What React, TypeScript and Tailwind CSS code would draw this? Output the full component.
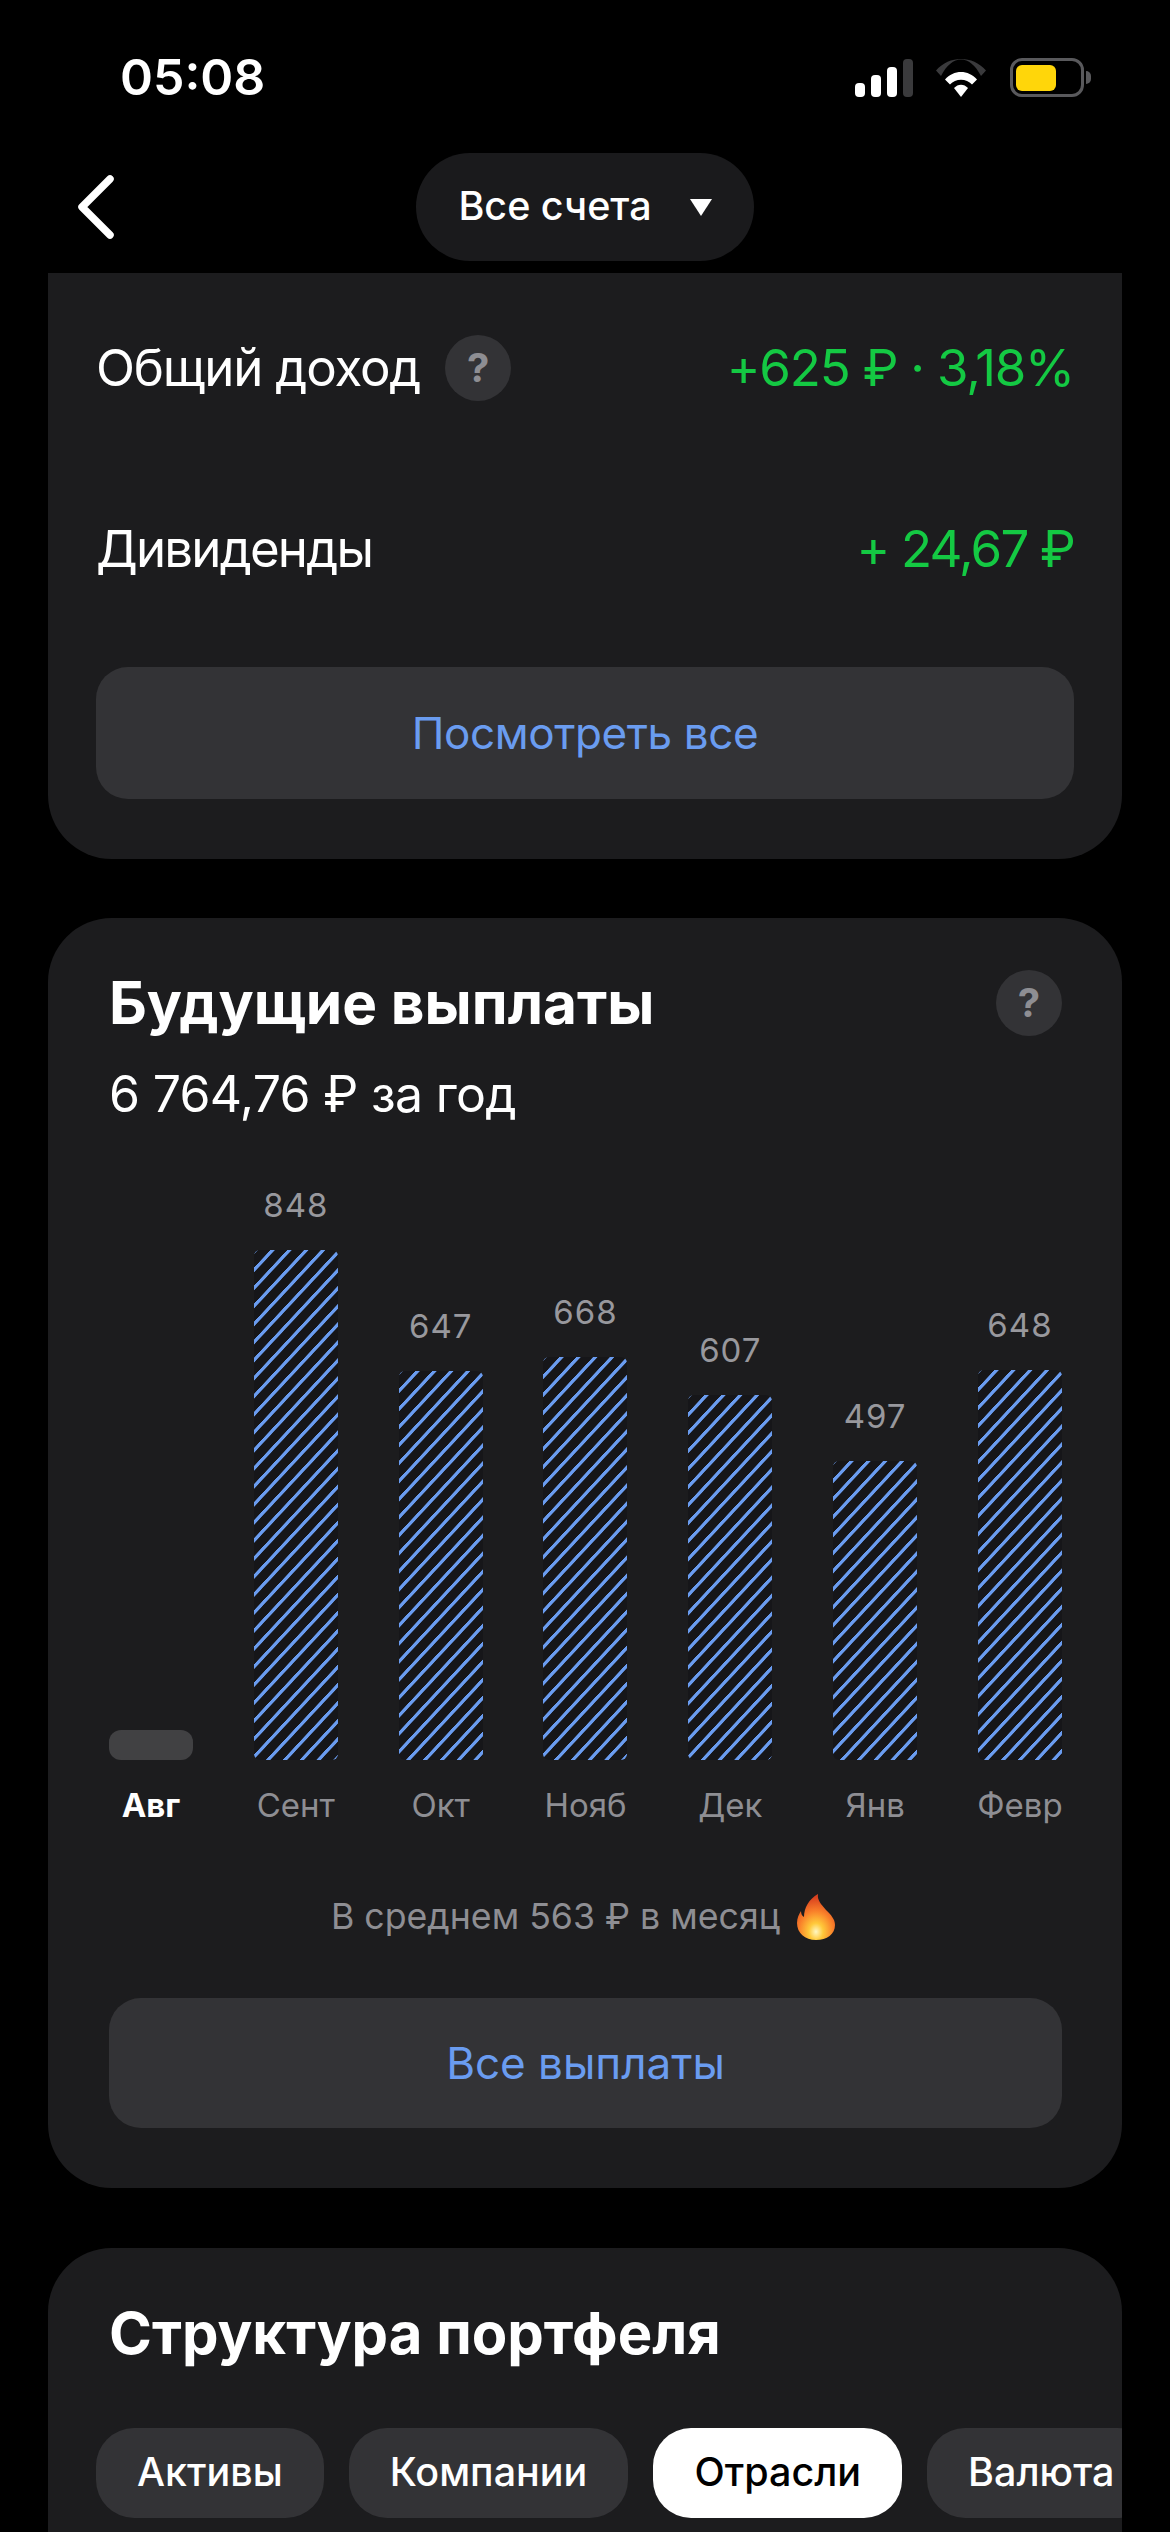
import React from 'react';

const bars = [
  { month: 'Авг', value: '', height: 30 },
  { month: 'Сент', value: '848', height: 510 },
  { month: 'Окт', value: '647', height: 389 },
  { month: 'Нояб', value: '668', height: 403 },
  { month: 'Дек', value: '607', height: 365 },
  { month: 'Янв', value: '497', height: 299 },
  { month: 'Февр', value: '648', height: 390 },
];

const chips = ['Активы', 'Компании', 'Отрасли', 'Валюта'];

const Help: React.FC = () => (
  <div className="flex h-[66px] w-[66px] shrink-0 items-center justify-center rounded-full bg-[#333336] text-[40px] font-bold text-[#8e8e93]">
    ?
  </div>
);

const StatusIcons: React.FC = () => (
  <div className="flex items-center">
    <svg width="58" height="38" viewBox="0 0 58 38" className="mr-[23px]">
      <rect x="0" y="24" width="10" height="14" rx="4" fill="#fff" />
      <rect x="16" y="16" width="10" height="22" rx="4" fill="#fff" />
      <rect x="32" y="8" width="10" height="30" rx="4" fill="#fff" />
      <rect x="48" y="0" width="10" height="38" rx="4" fill="#3a3a3c" />
    </svg>
    <svg width="50" height="38" viewBox="0 0 50 38" className="mr-[24px]">
      <path d="M0 11.5C13.5-3.8 36.5-3.8 50 11.5L45 17C34-5 16-5 5 17Z" fill="#3a3a3c" />
      <path d="M9 20.5C17.500 10.500 32.500 10.500 41 20.500L36 25.500C30.500 19 19.500 19 14 25.500Z" fill="#fff" />
      <path d="M18 29C22 24.500 28 24.500 32 29L25 38Z" fill="#fff" />
    </svg>
    <div className="relative flex h-[39px] w-[74px] items-center rounded-[12px] border-[3px] border-[#59595c] pl-[3px]">
      <div className="h-[26px] w-[40px] rounded-[6px] bg-[#ffd60a]" />
      <div className="absolute right-[-10px] top-[10px] h-[13px] w-[5px] rounded-r-full bg-[#59595c]" />
    </div>
  </div>
);

const Flame: React.FC = () => (
  <svg width="38" height="46" viewBox="0 0 38 46" className="ml-[17px]">
    <defs>
      <radialGradient id="flame" cx="50%" cy="82%" r="75%">
        <stop offset="0%" stopColor="#fff7c2" />
        <stop offset="25%" stopColor="#ffc93a" />
        <stop offset="60%" stopColor="#f9802a" />
        <stop offset="100%" stopColor="#d9401f" />
      </radialGradient>
    </defs>
    <path
      d="M19 46C8 46 0 39 0 29C0 24 2 20 4 17C4 20 5 22 7 23C7 14 12 5 21 0C20 6 24 10 29 16C34 21 38 25 38 31C38 40 30 46 19 46Z"
      fill="url(#flame)"
    />
  </svg>
);

export default function App() {
  return (
    <div className="h-[2532px] w-[1170px] overflow-hidden bg-black font-['Inter','Noto_Sans',sans-serif] text-white">
      {/* Status bar */}
      <div className="flex h-[153px] items-start justify-between pl-[120px] pr-[86px] pt-[58px]">
        <span className="text-[50px] font-semibold leading-[38px]">05:08</span>
        <StatusIcons />
      </div>

      {/* Header */}
      <div className="grid h-[108px] grid-cols-[1fr_auto_1fr] items-center">
        <svg width="40" height="64" viewBox="0 0 40 64" className="ml-[76px]" fill="none">
          <path d="M34 4L6 32L34 60" stroke="#fff" strokeWidth="7.500" strokeLinecap="round" strokeLinejoin="round" />
        </svg>
        <div className="flex h-[108px] w-[338px] items-center justify-center rounded-[54px] bg-[#1a1a1c]">
          <span className="text-[39.500px] font-medium">Все счета</span>
          <span className="ml-[38px] h-0 w-0 border-x-[11px] border-t-[17px] border-x-transparent border-t-white" />
        </div>
      </div>

      {/* Income card */}
      <div className="mx-12 mt-3 rounded-b-[64px] bg-[#1c1c1e] pb-[60px] pl-12 pr-[48px] pt-[5px]">
        <div className="flex h-[180px] items-center justify-between">
          <div className="flex items-center">
            <span className="text-[51px] tracking-[-1.200px]">Общий доход</span>
            <div className="ml-[25px]">
              <Help />
            </div>
          </div>
          <span className="text-[51px] tracking-[-1.200px] text-[#14c943]">+625 ₽ · 3,18%</span>
        </div>
        <div className="flex h-[182px] items-center justify-between">
          <span className="text-[51px] tracking-[-1.800px]">Дивиденды</span>
          <span className="text-[51px] tracking-[-1.800px] text-[#14c943]">+ 24,67 ₽</span>
        </div>
        <div className="mt-[27px] flex h-[132px] items-center justify-center rounded-[32px] bg-[#333336] text-[44px] tracking-[-0.400px] text-[#6a9cf0]">
          Посмотреть все
        </div>
      </div>

      {/* Future payouts */}
      <div className="mx-12 mt-[59px] rounded-[64px] bg-[#1c1c1e] pb-[60px] pl-[61px] pr-[60px] pt-[50px]">
        <div className="flex h-[70px] items-center justify-between">
          <span className="text-[58.500px] font-bold">Будущие выплаты</span>
          <Help />
        </div>
        <div className="mt-[26px] text-[50px] leading-[60px] tracking-[-0.700px]">6 764,76 ₽ за год</div>

        <div className="mt-[61px] flex items-end justify-between">
          {bars.map((bar, i) => (
            <div key={bar.month} className="flex w-[84px] flex-col items-center">
              {bar.value && (
                <span className="mb-[25px] h-[40px] text-[33px] leading-[40px] tracking-[1px] text-[#98989d]">{bar.value}</span>
              )}
              {i === 0 ? (
                <div className="h-[30px] w-[84px] rounded-[12px] bg-[#414143]" />
              ) : (
                <div
                  className="w-[84px] rounded-[6px] bg-[repeating-linear-gradient(133deg,#6a9cf0_0,#6a9cf0_2.600px,#161619_3.400px,#161619_11.800px,#6a9cf0_12.300px)]"
                  style={{ height: bar.height }}
                />
              )}
              <span
                className={
                  i === 0
                    ? 'mt-[20px] h-[50px] text-[33px] font-bold leading-[50px] text-white'
                    : 'mt-[20px] h-[50px] whitespace-nowrap text-[33px] leading-[50px] text-[#8e8e93]'
                }
              >
                {bar.month}
              </span>
            </div>
          ))}
        </div>

        <div className="mt-[62px] flex h-[50px] items-center justify-center pr-[5px] text-[35.700px] text-[#8e8e93]">
          В среднем 563 ₽ в месяц
          <Flame />
        </div>

        <div className="mt-[56px] flex h-[130px] items-center justify-center rounded-[32px] bg-[#333336] text-[44px] text-[#6a9cf0]">
          Все выплаты
        </div>
      </div>

      {/* Portfolio structure */}
      <div className="mx-12 mt-[60px] h-[400px] overflow-hidden rounded-[64px] bg-[#1c1c1e] pt-[50px]">
        <div className="ml-[61px] h-[70px] text-[58px] font-bold leading-[70px]">Структура портфеля</div>
        <div className="mt-[60px] flex gap-[25px] pl-[48px]">
          {chips.map((chip) => (
            <div
              key={chip}
              className={
                chip === 'Отрасли'
                  ? 'flex h-[90px] shrink-0 items-center rounded-[38px] bg-white px-[41px] text-[39.500px] font-medium text-black'
                  : 'flex h-[90px] shrink-0 items-center rounded-[38px] bg-[#333336] px-[41px] text-[39.500px] font-medium text-white'
              }
            >
              {chip}
            </div>
          ))}
        </div>
      </div>
    </div>
  );
}
